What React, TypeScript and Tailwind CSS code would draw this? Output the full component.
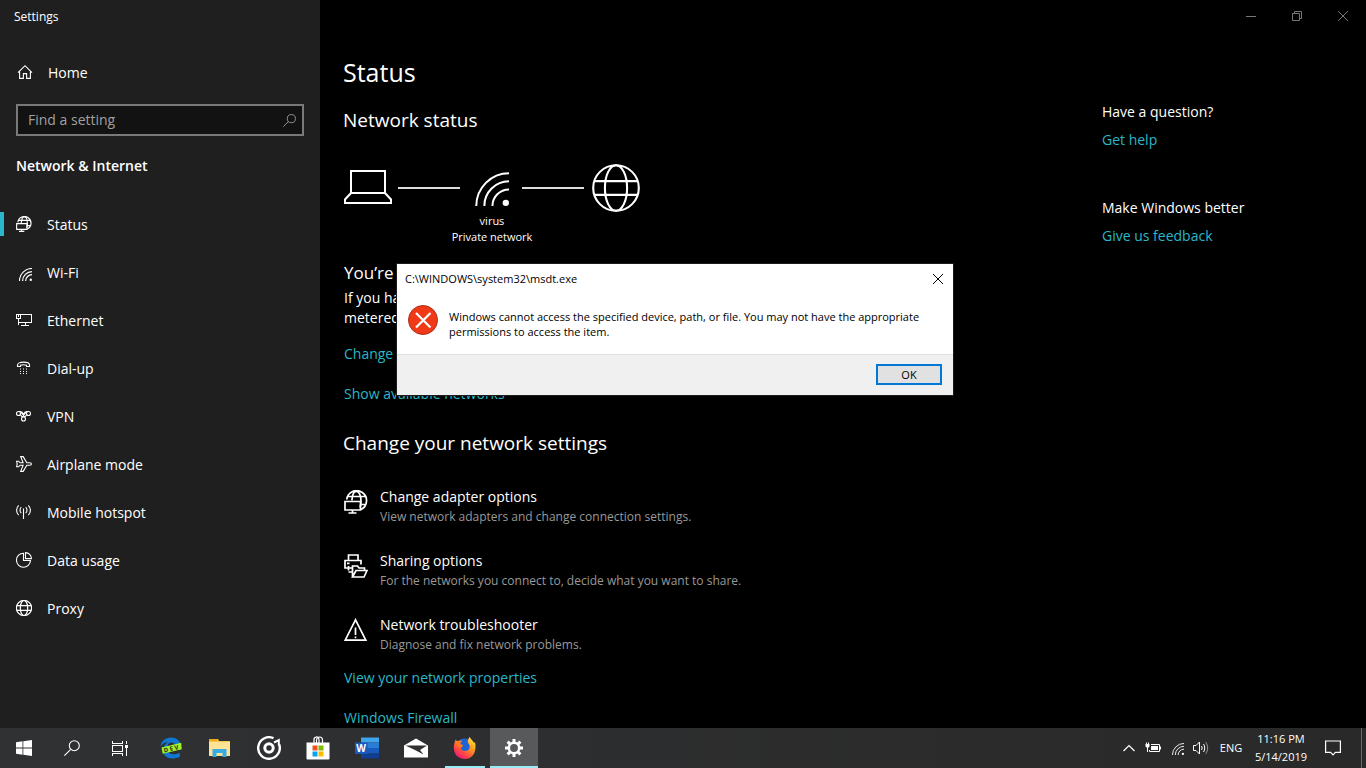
import React from "react";

type IconProps = { className?: string };

function HomeIcon() {
  return (
    <svg width="16" height="16" viewBox="0 0 16 16" fill="none" stroke="currentColor" strokeWidth="1.1">
      <path d="M1 8.6 8 1.7l7 6.9M2.6 7.4v7h3.8v-4.8h3.2v4.8h3.8v-7" />
    </svg>
  );
}

function SearchIcon({ className = "size-4" }: IconProps) {
  return (
    <svg className={className} viewBox="0 0 16 16" fill="none" stroke="currentColor" strokeWidth="1.1">
      <circle cx="10.3" cy="5.7" r="5" />
      <path d="M6.7 9.3.4 15.6" />
    </svg>
  );
}

function NetworkIcon({ className = "size-4" }: IconProps) {
  return (
    <svg className={className} viewBox="0 0 24 24" fill="none" stroke="currentColor" strokeWidth="1.7">
      <path d="M2.800 9.500A9.900 9.900 0 1 1 17 19.500M4 6.500h17M16.500 14.500h5.500M7.900 10.500c.3-5.200 1.800-9.200 4.400-9.200s4.700 3.800 4.700 9.700c0 3-.3 4.800-1 6.500" />
      <path d="M1 11.500h15.500v8.500H1zM8.500 20v3M4.500 23h8" />
    </svg>
  );
}

function WifiIcon({ className = "size-4", weight = 1.4 }: IconProps & { weight?: number }) {
  return (
    <svg className={className} viewBox="0 0 16 16" fill="none" stroke="currentColor" strokeWidth={weight}>
      <path d="M.6 16A15.400 15.400 0 0 1 16 .6M4.400 16A11.600 11.600 0 0 1 16 4.400M8.200 16A7.800 7.800 0 0 1 16 8.200" />
      <circle cx="14.500" cy="14.500" r="1.500" fill="currentColor" stroke="none" />
    </svg>
  );
}

function EthernetIcon() {
  return (
    <svg width="16" height="16" viewBox="0 0 16 16" fill="none" stroke="currentColor" shapeRendering="crispEdges">
      <path d="M5 2.500h10.500v8H2.500V6M.500 2.500h4v4h-4zM2.500 6v7M9.500 10.500v3M5 13.500h8M2.500 3v2" />
    </svg>
  );
}

function DialUpIcon() {
  return (
    <svg width="16" height="16" viewBox="0 0 16 16" fill="none" stroke="currentColor" strokeWidth="1.100">
      <path d="M1.500 6.500V5c0-1.800 2.500-2.900 6-2.900s6 1.100 6 2.900v1.500h-3V5.200c-2-.6-4-.6-6 0v1.300z" />
      <path d="M4 9h1m2 0h1m2 0h1M4 11.500h1m2 0h1m2 0h1M4 13.500h1m2 0h1m2 0h1" />
    </svg>
  );
}

function VpnIcon() {
  return (
    <svg width="16" height="16" viewBox="0 0 16 16" fill="none" stroke="currentColor" strokeWidth="1.100">
      <circle cx="2.500" cy="5.500" r="2" />
      <circle cx="12.500" cy="5.500" r="2" />
      <circle cx="7.500" cy="11" r="2" />
      <path d="M2.500 3.500h2l4.200 5.700M4.200 6.500l2 2.700M12.500 3.500h-2L6.300 9.200M10.800 6.500l-2 2.700M5.500 3.500l2 2.500 2-2.500" />
    </svg>
  );
}

function AirplaneIcon() {
  return (
    <svg width="16" height="16" viewBox="0 0 16 16" fill="none" stroke="currentColor" strokeWidth="1.100">
      <path d="M.600 5.200h2l1.500 1.600h3L4.700.600h2.500l3.600 6.200h3c2.200 0 2.200 2.400 0 2.400h-3l-3.600 6.200H4.700l2.400-6.200h-3l-1.500 1.600h-2L1.200 8z" />
    </svg>
  );
}

function HotspotIcon() {
  return (
    <svg width="16" height="16" viewBox="0 0 16 16" fill="none" stroke="currentColor" strokeWidth="1.100">
      <path d="M7.500 4.500V15M5.300 3.200c-1.700 1.600-1.700 4.400 0 6M9.700 3.200c1.700 1.600 1.700 4.400 0 6M2.700 1.300c-2.800 2.600-2.800 7.200 0 9.800M12.300 1.300c2.800 2.600 2.800 7.200 0 9.800" />
    </svg>
  );
}

function DataIcon() {
  return (
    <svg width="16" height="16" viewBox="0 0 16 16" fill="none" stroke="currentColor" strokeWidth="1.100">
      <path d="M7.500 1.200a7 7 0 1 0 7 7.300h-7z" />
      <path d="M9.500.6v6h5.900a6 6 0 0 0-5.900-6z" />
    </svg>
  );
}

function GlobeIcon({ className = "size-4", weight = 1.200 }: IconProps & { weight?: number }) {
  return (
    <svg className={className} viewBox="0 0 16 16" fill="none" stroke="currentColor" strokeWidth={weight}>
      <circle cx="8" cy="8" r="7.600" />
      <ellipse cx="8" cy="8" rx="3.700" ry="7.600" />
      <path d="M1 5.700h14M1 10.300h14" />
    </svg>
  );
}

function LaptopIcon() {
  return (
    <svg width="48" height="34" viewBox="0 0 48 34" fill="none" stroke="currentColor" strokeWidth="2">
      <path d="M7 1h34v22H7zM7 23l-6 6.500V33h46v-3.500L41 23" />
    </svg>
  );
}

function SharingIcon() {
  return (
    <svg width="24" height="24" viewBox="0 0 24 24" fill="none" stroke="currentColor" strokeWidth="1.700">
      <path d="M4.500 6.500V1h9.500v5.500M8 14H1V6.500h16v4M4.500 16.500V12M3 9.300h2.500M4.500 18H8" />
      <path d="M8.500 23V12h5l1.500 2h5.500v2.500M8.500 23l3.500-6.500h11L20 23z" />
    </svg>
  );
}

function WarningIcon() {
  return (
    <svg width="24" height="24" viewBox="0 0 24 24" fill="none" stroke="currentColor" strokeWidth="1.700">
      <path d="M11.500 1.800 1.200 22.200h20.600zM11.500 9.500v7.500M11.500 18.500v1.700" />
    </svg>
  );
}

function CloseIcon() {
  return (
    <svg width="10" height="10" viewBox="0 0 10 10" stroke="currentColor">
      <path d="m0 0 10 10M10 0 0 10" />
    </svg>
  );
}

const navItems = [
  { label: "Status", icon: <NetworkIcon />, active: true },
  { label: "Wi-Fi", icon: <WifiIcon className="mt-1 ml-0.5 size-[13px]" weight={1.500} /> },
  { label: "Ethernet", icon: <EthernetIcon /> },
  { label: "Dial-up", icon: <DialUpIcon /> },
  { label: "VPN", icon: <VpnIcon /> },
  { label: "Airplane mode", icon: <AirplaneIcon /> },
  { label: "Mobile hotspot", icon: <HotspotIcon /> },
  { label: "Data usage", icon: <DataIcon /> },
  { label: "Proxy", icon: <GlobeIcon /> },
];

function Sidebar() {
  return (
    <nav className="flex w-80 shrink-0 flex-col bg-[#1f1f1f]" aria-label="Settings">
      <div className="flex h-8 items-center px-[14px] pt-0.5 text-[12px]">Settings</div>
      <a href="#home" className="mt-4 flex h-12 items-center gap-[15px] px-[17px]">
        <HomeIcon />
        Home
      </a>
      <div className="mx-4 mt-2 flex h-8 items-center border-2 border-[#797979] bg-[#121212] pr-1.5 pl-2.5 text-[#a0a0a0]">
        <input
          aria-label="Find a setting"
          placeholder="Find a setting"
          className="min-w-0 flex-1 bg-transparent pb-px text-[14px] outline-none placeholder:text-[#a0a0a0]"
        />
        <button aria-label="Search"><SearchIcon className="size-[13px]" /></button>
      </div>
      <h2 className="mt-5 px-4 text-[14px] leading-5 font-semibold">Network &amp; Internet</h2>
      <ul className="mt-6">
        {navItems.map((item) => (
          <li key={item.label}>
            <a href="#nav" className="flex h-12 items-center">
              <span className={item.active ? "h-6 w-1 bg-[#2ab7cb]" : "h-6 w-1"} />
              <span className="ml-3 flex w-4 justify-center">{item.icon}</span>
              <span className="ml-[15px]">{item.label}</span>
            </a>
          </li>
        ))}
      </ul>
    </nav>
  );
}

const options = [
  { title: "Change adapter options", text: "View network adapters and change connection settings.", icon: <NetworkIcon className="size-6" /> },
  { title: "Sharing options", text: "For the networks you connect to, decide what you want to share.", icon: <SharingIcon /> },
  { title: "Network troubleshooter", text: "Diagnose and fix network problems.", icon: <WarningIcon /> },
];

const link = "block w-fit leading-5 text-[#2ab7c8]";

function StatusPage() {
  return (
    <div className="min-w-0 flex-1 pl-6">
      <h1 className="mt-5 -ml-px text-[25px] leading-10">Status</h1>
      <h2 className="mt-4 -ml-px text-[19px] leading-6">Network status</h2>
      <figure className="mt-8 w-[296px]">
        <div className="flex h-12 items-center">
          <span className="pb-0.5"><LaptopIcon /></span>
          <span className="mx-1.5 h-0.5 flex-1 bg-[#dcdcdc]" />
          <span className="flex w-[50px] justify-center pt-0.5 pl-px"><WifiIcon className="size-[34px]" weight={0.950} /></span>
          <span className="mx-1.5 h-0.5 flex-1 bg-[#dcdcdc]" />
          <GlobeIcon className="ml-0.5 size-12" weight={0.700} />
        </div>
        <figcaption className="mt-px text-center text-[11px] leading-4">
          virus
          <br />
          Private network
        </figcaption>
      </figure>
      <h3 className="mt-4 text-[17px] leading-6">You’re connected to the Internet</h3>
      <p className="mt-[3px] leading-5">
        If you have a limited data plan, you can make this network a
        <br />
        metered connection or change other properties.
      </p>
      <a href="#properties" className={`${link} mt-4`}>Change connection properties</a>
      <a href="#networks" className={`${link} mt-5`}>Show available networks</a>
      <h2 className="mt-[23px] -ml-px text-[19px] leading-8">Change your network settings</h2>
      <ul className="mt-7 space-y-6">
        {options.map((option) => (
          <li key={option.title}>
            <a href="#option" className="flex w-fit gap-3">
              <span className="mt-[3px]">{option.icon}</span>
              <span>
                <span className="block leading-5">{option.title}</span>
                <span className="block text-[12px] leading-5 text-[#999999]">{option.text}</span>
              </span>
            </a>
          </li>
        ))}
      </ul>
      <a href="#view" className={`${link} mt-[13px]`}>View your network properties</a>
      <a href="#firewall" className={`${link} mt-5`}>Windows Firewall</a>
    </div>
  );
}

function Dialog() {
  return (
    <div
      role="dialog"
      aria-labelledby="dialog-title"
      className="absolute top-[264px] left-[397px] flex w-[556px] flex-col bg-white text-[11px] text-black outline outline-[#1c1c1c]"
    >
      <div className="flex h-[30px] items-center justify-between pl-2">
        <span id="dialog-title">C:\WINDOWS\system32\msdt.exe</span>
        <button aria-label="Close" className="flex h-7 w-[30px] items-center justify-center"><CloseIcon /></button>
      </div>
      <div className="flex h-[60px] gap-[11px] px-[11px] pt-[11px]">
        <svg width="30" height="30" viewBox="0 0 30 30" className="shrink-0">
          <circle cx="15" cy="15" r="14.500" fill="#f03a17" stroke="#a8301c" />
          <path d="m8 8 14.500 14.500M22.500 8 8 22.500" stroke="#fff" strokeWidth="2.200" />
        </svg>
        <p className="pt-1 leading-[15px]">
          Windows cannot access the specified device, path, or file. You may not have the appropriate
          permissions to access the item.
        </p>
      </div>
      <div className="flex h-[41px] items-center justify-end border-t border-[#dfdfdf] bg-[#f0f0f0] pr-[11px] pb-px">
        <button className="h-[21px] w-[66px] border-2 border-[#0078d7] bg-[#e1e1e1] leading-4">OK</button>
      </div>
    </div>
  );
}

const apps = [
  {
    label: "Microsoft Edge Dev",
    icon: (
      <svg width="24" height="24" viewBox="0 0 24 24">
        <path d="M1.500 10.500C2 5 6.500 1.500 12 1.500c6 0 10 4 10 9.500v2.500H8.500c.3 3.300 3 4.800 6.500 4.800 2.300 0 4.300-.6 5.800-1.500v4c-2 1.200-4.500 1.700-7 1.700-6 0-9.700-3.500-9.700-8.500 0-3.500 1.900-6.300 5-7.800-3.300 0-5.900 1.500-7.600 4.300zm7.200-.5h7.300c0-2-1.200-3.500-3.500-3.500s-3.600 1.500-3.800 3.500z" fill="#0f78d4" />
        <path d="m2.500 11.500 19.700-4.700.5 6.400-19 4.600z" fill="#a4f02c" />
        <text x="4.500" y="14.800" fontSize="6" fontWeight="700" fill="#14280a" transform="rotate(-13 12 12)">D E V</text>
      </svg>
    ),
  },
  {
    label: "File Explorer",
    icon: (
      <svg width="24" height="24" viewBox="0 0 24 24">
        <path d="M1 3h9l1 2h11v15H1z" fill="#f5c84c" />
        <path d="M1 6h21v14H1z" fill="#ffe394" />
        <path d="M1 3h8v2H1z" fill="#f0a91e" />
        <path d="M4.500 13h14v8h-4v-4h-6v4h-4z" fill="#35ace5" />
      </svg>
    ),
  },
  {
    label: "Groove Music",
    icon: (
      <svg width="24" height="24" viewBox="0 0 24 24" fill="none" stroke="#fff">
        <path d="M16.500 2.200A10.800 10.800 0 1 0 22.200 8.500" strokeWidth="2.400" />
        <path d="M17 6.500l4.800-2.300v5" strokeWidth="2" />
        <circle cx="12" cy="12" r="4.200" strokeWidth="3" />
      </svg>
    ),
  },
  {
    label: "Microsoft Store",
    icon: (
      <svg width="24" height="24" viewBox="0 0 24 24">
        <path d="M8 7V4.500a2.500 3 0 0 1 5-1V7M10.500 7V4a3 3 0 0 1 6 0v3" fill="none" stroke="#fff" strokeWidth="1.200" />
        <path d="M.500 6.500h23v16a1 1 0 0 1-1 1H1.500a1 1 0 0 1-1-1z" fill="#fff" />
        <path d="M6.500 9.500h5v5h-5z" fill="#f25022" />
        <path d="M12.500 9.500h5v5h-5z" fill="#7fba00" />
        <path d="M6.500 15.500h5v5h-5z" fill="#00a4ef" />
        <path d="M12.500 15.500h5v5h-5z" fill="#ffb900" />
      </svg>
    ),
  },
  {
    label: "Word",
    icon: (
      <svg width="24" height="24" viewBox="0 0 24 24">
        <path d="M6 1.500h18v5H6z" fill="#41a5ee" />
        <path d="M6 6.500h18V12H6z" fill="#2b7cd3" />
        <path d="M6 12h18v5.500H6z" fill="#185abd" />
        <path d="M6 17.500h18v5H6z" fill="#103f91" />
        <path d="M0 6.500h12.500v11.500H0z" fill="#185abd" />
        <text x="6.200" y="15.800" fontSize="10" fontWeight="700" textAnchor="middle" fill="#fff">W</text>
      </svg>
    ),
  },
  {
    label: "Mail",
    icon: (
      <svg width="24" height="24" viewBox="0 0 24 24">
        <path d="M0 9.500 12 2.500l12 7v12H0z" fill="#fff" />
        <path d="M1.500 9.500h21.500l-7 4.500 3.500 4.500-7.500-4z" fill="#303030" />
      </svg>
    ),
  },
  {
    label: "Firefox",
    running: true,
    icon: (
      <svg width="24" height="24" viewBox="0 0 24 24">
        <defs>
          <linearGradient id="fox" x1="0.900" y1="0" x2="0.200" y2="1">
            <stop offset="0" stopColor="#fff04a" />
            <stop offset="0.400" stopColor="#ff9a1c" />
            <stop offset="0.750" stopColor="#ff3f4a" />
            <stop offset="1" stopColor="#e4128c" />
          </linearGradient>
        </defs>
        <circle cx="11.500" cy="11" r="8.500" fill="#1e63d8" />
        <path d="M2.500 3.500c.7 1 1.500 1.500 2.500 1.600 1.300-.5 2.800-.6 4-.2C7.700 5.800 7 7 7.200 8.300l2.800.9c.5.800-1.800 1.600-2.300 2.800.7 3 4.300 3.700 7 2.300 2.500-1.500 2.700-5.200.3-7.300-.5-2.500.4-4.800 1.800-6 1 2.600 3.300 3.600 4.300 6l.900-1c1.900 8.500-1.500 17-10 17S-.500 16 1.200 8z" fill="url(#fox)" />
        <path d="M5 5.100c1.300-.5 2.800-.6 4-.2C7.700 5.800 7 7 7.200 8.300l2.800.9c.5.800-1.800 1.600-2.300 2.800-3-1-4.200-4-2.700-6.900z" fill="#ff7a1a" />
      </svg>
    ),
  },
  {
    label: "Settings",
    active: true,
    icon: (
      <svg width="20" height="20" viewBox="0 0 20 20" fill="none" stroke="#fff">
        <circle cx="10" cy="10" r="5.200" strokeWidth="2.500" />
        {[0, 45, 90, 135].map((angle) => (
          <path key={angle} d="M10 1v3.500M10 15.500V19" strokeWidth="3" transform={`rotate(${angle} 10 10)`} />
        ))}
      </svg>
    ),
  },
];

function Taskbar() {
  const shell = "flex h-10 w-12 items-center justify-center";
  const tray = "flex w-6 items-center justify-center";
  return (
    <footer className="flex h-10 shrink-0 justify-between bg-linear-to-r from-[#303133] to-[#292929]">
      <div className="flex">
        <button aria-label="Start" className={shell}>
          <svg width="16" height="16" viewBox="0 0 16 16" fill="#fff">
            <path d="M0 2.200 6.500 1.300V7.600H0zM7.300 1.200 16 0v7.600H7.300zM0 8.400h6.500v6.300L0 13.800zM7.300 8.400H16V16l-8.700-1.200z" />
          </svg>
        </button>
        <button aria-label="Search" className={shell}><SearchIcon /></button>
        <button aria-label="Task View" className={shell}>
          <svg width="16" height="16" viewBox="0 0 16 16" fill="none" stroke="#fff" shapeRendering="crispEdges">
            <path d="M.500 1v2.500h10V1M.500 5.500h10v6H.500zM.500 16v-2.500h10V16M14.500 1v3M14.500 8v8" />
            <path d="M13 5h3v3h-3z" fill="#fff" stroke="none" />
          </svg>
        </button>
        <div className="ml-[3px] flex gap-px">
          {apps.map((app) => (
            <button
              key={app.label}
              aria-label={app.label}
              className={`${app.active ? "bg-[#58595a]" : ""} flex h-10 w-12 flex-col items-center`}
            >
              <span className="flex flex-1 items-center pt-0.5">{app.icon}</span>
              <span className={`h-0.5 ${app.active ? "w-full bg-[#99ebf5]" : app.running ? "w-10 bg-[#99ebf5]" : "w-10"}`} />
            </button>
          ))}
        </div>
      </div>
      <div className="flex text-[11px]">
        <button aria-label="Show hidden icons" className={tray}>
          <svg width="12" height="8" viewBox="0 0 12 8" fill="none" stroke="#fff" strokeWidth="1.200"><path d="m.500 7 5.500-5.500L11.500 7" /></svg>
        </button>
        <button aria-label="Battery" className={tray}>
          <svg width="16" height="12" viewBox="0 0 16 12" fill="none" stroke="#fff">
            <path d="M6 2.500h8.500v7h-10V8M15.500 4.500v3M1.500.500V2M3.500.500V2M2.500 5v5" />
            <path d="M.500 2h4v2.500l-1 1h-2l-1-1zM6 4h7v4H6z" fill="#fff" stroke="none" />
          </svg>
        </button>
        <button aria-label="Wi-Fi" className={tray}><WifiIcon className="mt-0.5 ml-0.5 size-3" weight={1.200} /></button>
        <button aria-label="Volume" className={tray}>
          <svg width="16" height="14" viewBox="0 0 16 14" fill="none" stroke="#fff">
            <path d="M.500 4.500H3L6.500 1v12L3 9.500H.500zM8.500 5c.8 1.200.8 2.800 0 4M10.500 3c1.700 2.400 1.700 5.600 0 8" />
            <path d="M12.700 1.200c2.600 3.500 2.600 8.100 0 11.600" opacity="0.500" />
          </svg>
        </button>
        <button className="w-9">ENG</button>
        <button className="ml-1 w-14 leading-[18px] whitespace-nowrap">
          11:16 PM
          <br />
          5/14/2019
        </button>
        <button aria-label="Notifications" className={shell}>
          <svg width="16" height="16" viewBox="0 0 16 16" fill="none" stroke="#fff" strokeWidth="1.200">
            <path d="M.600 1h14.800v11.400h-5L8 14.800l-2.400-2.400h-5z" />
          </svg>
        </button>
        <button aria-label="Show desktop" className="ml-1 w-[5px] border-l border-[#6a6a6a]" />
      </div>
    </footer>
  );
}

function WindowControls() {
  const control = "flex h-8 w-[46px] items-center justify-center";
  return (
    <div className="flex h-8 justify-end text-[#777777]">
      <button aria-label="Minimize" className={control}><span className="h-px w-2.5 bg-[#777777]" /></button>
      <button aria-label="Restore" className={control}>
        <svg width="10" height="10" viewBox="0 0 10 10" fill="none" stroke="currentColor"><path d="M.500 2.500h7v7h-7zM2.500 2.500v-2h7v7h-2" /></svg>
      </button>
      <button aria-label="Close" className={control}><CloseIcon /></button>
    </div>
  );
}

export default function App() {
  return (
    <div className="relative flex h-screen flex-col overflow-hidden bg-black font-['Open_Sans','Noto_Sans',sans-serif] text-[14px] text-white">
      <div className="flex min-h-0 flex-1">
        <Sidebar />
        <main className="flex min-w-0 flex-1 flex-col overflow-hidden">
          <WindowControls />
          <div className="flex">
            <StatusPage />
            <aside className="w-[264px] shrink-0 pt-[70px] leading-5">
              <p>Have a question?</p>
              <a href="#help" className={`${link} mt-2`}>Get help</a>
              <p className="mt-12">Make Windows better</p>
              <a href="#feedback" className={`${link} mt-2`}>Give us feedback</a>
            </aside>
          </div>
        </main>
      </div>
      <Taskbar />
      <Dialog />
    </div>
  );
}
